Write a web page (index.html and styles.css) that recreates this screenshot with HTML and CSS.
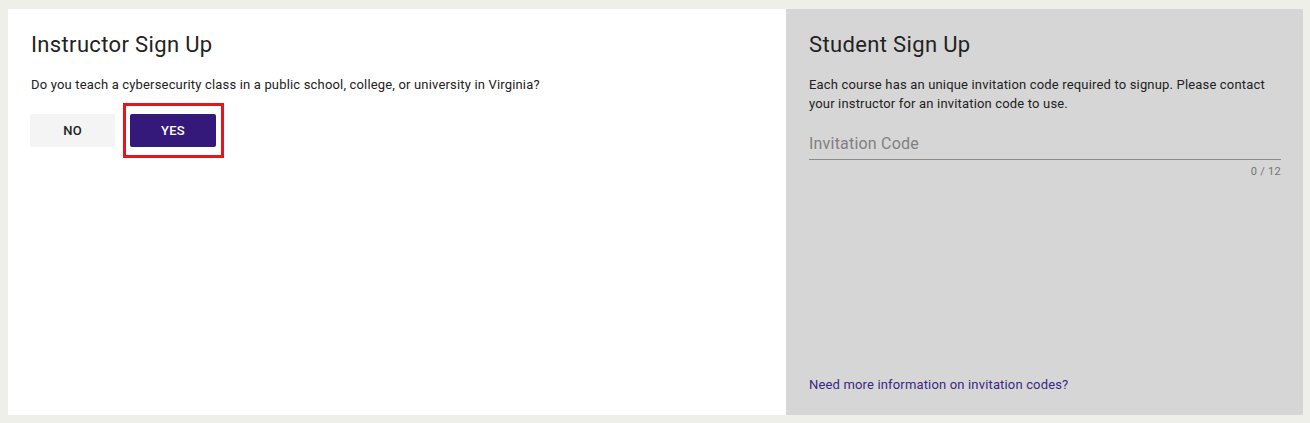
FILE: index.html
```html
<!DOCTYPE html>
<html lang="en">
<head>
<meta charset="utf-8">
<title>Sign Up</title>
<link rel="stylesheet" href="styles.css">
</head>
<body>
<main class="signup">
  <section class="panel panel-instructor">
    <h2 class="panel-title">Instructor Sign Up</h2>
    <p class="panel-text">Do you teach a cybersecurity class in a public school, college, or university in Virginia?</p>
    <div class="actions">
      <button class="btn btn-no" type="button">NO</button>
      <span class="highlight-wrap">
        <button class="btn btn-yes" type="button">YES</button>
        <span class="highlight"></span>
      </span>
    </div>
  </section>
  <section class="panel panel-student">
    <h2 class="panel-title">Student Sign Up</h2>
    <p class="panel-text">Each course has an unique invitation code required to signup. Please contact your instructor for an invitation code to use.</p>
    <div class="field">
      <input class="field-input" type="text" placeholder="Invitation Code" maxlength="12">
      <div class="field-counter">0 / 12</div>
    </div>
    <a class="info-link" href="#">Need more information on invitation codes?</a>
  </section>
</main>
</body>
</html>
```

FILE: styles.css
```css
* { box-sizing: border-box; }
html, body { margin: 0; padding: 0; }
body {
  background: #efefe9;
  font-family: Roboto, "Noto Sans", Arial, sans-serif;
  color: rgba(0,0,0,0.87);
  padding: 9px 7px 8px 8px;
}
.signup {
  display: flex;
  height: 406px;
}
.panel {
  display: flex;
  flex-direction: column;
  padding: 23px 22px 22px 22px;
}
.panel-instructor {
  flex: 0 0 778px;
  background: #ffffff;
}
.panel-instructor .panel-title,
.panel-instructor .panel-text {
  padding-left: 1px;
}
.panel-student {
  flex: 1 1 auto;
  background: #d6d6d6;
  padding-left: 23px;
}
.panel-title {
  margin: 0;
  font-size: 22px;
  line-height: 26px;
  letter-spacing: 0.35px;
  font-weight: 400;
  color: #222;
}
.panel-text {
  margin: 17px 0 0;
  font-size: 13px;
  line-height: 19px;
  letter-spacing: 0.17px;
  color: #222;
}
.actions {
  display: flex;
  align-items: center;
  gap: 15px;
  margin-top: 20px;
}
.btn {
  font-family: inherit;
  font-size: 13px;
  font-weight: 500;
  letter-spacing: 0.2px;
  border: 0;
  border-radius: 2px;
  height: 33px;
  width: 85px;
  padding: 0;
  cursor: pointer;
}
.btn-no {
  background: #f4f4f4;
  color: #222;
}
.btn-yes {
  background: #35197a;
  color: #fff;
  width: 86px;
  display: block;
}
.highlight-wrap {
  position: relative;
  display: block;
}
.highlight {
  position: absolute;
  left: -7px;
  right: -8px;
  top: -11px;
  bottom: -11px;
  border: 3px solid #e8141b;
  pointer-events: none;
}
.field {
  margin-top: 16px;
}
.field-input {
  display: block;
  width: 100%;
  border: 0;
  border-bottom: 1px solid #8a8a8a;
  background: transparent;
  font-family: inherit;
  font-size: 16px;
  line-height: 20px;
  letter-spacing: 0.2px;
  padding: 5px 0 5px;
  color: #222;
  outline: none;
}
.field-input::placeholder { color: #808080; }
.field-counter {
  text-align: right;
  font-size: 11px;
  line-height: 14px;
  letter-spacing: 0.3px;
  color: #757575;
  margin-top: 5px;
}
.info-link {
  margin-top: auto;
  font-size: 13px;
  line-height: 16px;
  letter-spacing: 0.16px;
  color: #3a2784;
  text-decoration: none;
}
```
